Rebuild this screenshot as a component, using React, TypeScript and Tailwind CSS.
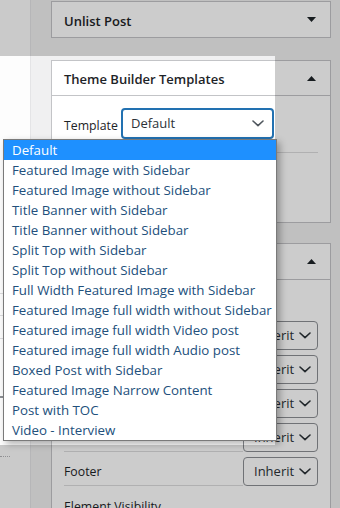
import React from "react";

const Chevron = ({ className = "" }: { className?: string }) => (
  <svg width="12" height="7" viewBox="0 0 12 7" className={className} fill="none">
    <path d="M1 1l5 4.6L11 1" stroke="currentColor" strokeWidth="1.6" strokeLinecap="round" strokeLinejoin="round" />
  </svg>
);

const TriDown = () => (
  <svg width="9" height="5" viewBox="0 0 9 5"><path d="M0 0h9L4.5 5z" fill="#1d2327" /></svg>
);
const TriUp = () => (
  <svg width="9" height="5" viewBox="0 0 9 5"><path d="M0 5h9L4.5 0z" fill="#1d2327" /></svg>
);

const items = [
  "Default",
  "Featured Image with Sidebar",
  "Featured Image without Sidebar",
  "Title Banner with Sidebar",
  "Title Banner without Sidebar",
  "Split Top with Sidebar",
  "Split Top without Sidebar",
  "Full Width Featured Image with Sidebar",
  "Featured Image full width without Sidebar",
  "Featured image full width Video post",
  "Featured image full width Audio post",
  "Boxed Post with Sidebar",
  "Featured Image Narrow Content",
  "Post with TOC",
  "Video - Interview",
];

const rows = ["", "", "", "", "Footer"];

export default function App() {
  return (
    <div
      className="relative w-[340px] h-[508px] overflow-hidden bg-[#f0f0f1] flex text-[#1d2327]"
      style={{ fontFamily: '"Open Sans", "Noto Sans", sans-serif' }}
    >
      {/* left editor strip */}
      <div className="w-[31px] shrink-0 bg-[#fdfdfd] border-r border-[#e4e4e6] flex flex-col">
        <div className="h-[293px] shrink-0" />
        <div className="h-px shrink-0 bg-[#dcdcde]" />
        <div className="h-[21px] shrink-0" />
        <div className="h-px shrink-0 bg-[#dcdcde]" />
        <div className="h-[22px] shrink-0" />
        <div className="h-px shrink-0 bg-[#dcdcde]" />
        <div className="h-[57px] shrink-0" />
        <div className="h-[2px] w-[4px] shrink-0 bg-[#8c8f94]" />
        <div className="h-[58px] shrink-0" />
        <div className="w-[10px] shrink-0 border-t border-dotted border-[#b5b5b8]" />
      </div>
      <div className="w-[20px] shrink-0" />

      {/* sidebar */}
      <div className="w-[280px] shrink-0 flex flex-col">
        {/* Unlist Post */}
        <div className="shrink-0 mt-[1px] h-[37px] bg-white border border-[#c3c4c7] flex items-center pl-[12px] pr-[14px]">
          <span className="flex-1 text-[13px] font-semibold leading-none pt-[3px]">Unlist Post</span>
          <TriDown />
        </div>

        {/* Theme Builder Templates */}
        <div className="shrink-0 mt-[22px] h-[163px] bg-white border border-[#c3c4c7] flex flex-col">
          <div className="shrink-0 h-[35px] border-b border-[#c3c4c7] flex items-center pl-[12px] pr-[14px]">
            <span className="flex-1 text-[13px] font-semibold leading-none pt-[3px]">Theme Builder Templates</span>
            <TriUp />
          </div>
          <div className="px-[12px] pt-[12px]">
            <div className="flex items-center">
              <span className="w-[57px] text-[12.3px] leading-none pt-[6px]">Template</span>
              <div className="w-[153px] h-[31px] border-2 border-[#2271b1] rounded-[4px] flex items-center pl-[8px] pr-[8px] text-[#2c3338]">
                <span className="flex-1 text-[13px]">Default</span>
                <Chevron className="text-[#50575e]" />
              </div>
            </div>
            <div className="mt-[13px] h-px bg-[#dcdcde]" />
          </div>
        </div>

        {/* Layout panel */}
        <div className="shrink-0 mt-[20px] h-[300px] bg-white border border-[#c3c4c7] flex flex-col">
          <div className="shrink-0 h-[36px] border-b border-[#c3c4c7] flex items-center pl-[12px] pr-[14px]">
            <span className="flex-1" />
            <TriUp />
          </div>
          <div className="pl-[12px] pr-[12px] pt-[41px] flex flex-col gap-[5px]">
            {rows.map((r, i) => (
              <div key={i} className="shrink-0 flex items-stretch h-[29px]">
                <div className="flex-1 border-b border-[#dcdcde] flex items-center text-[12.3px] pt-[2px]">{r}</div>
                <div className="w-[75px] h-[29px] border border-[#8c8f94] rounded-[4px] flex items-center pl-[10px] pr-[6px] text-[#2c3338]">
                  <span className="flex-1 text-[13px]">Inherit</span>
                  <Chevron className="text-[#2c3338]" />
                </div>
              </div>
            ))}
            <div className="mt-[7px] text-[12.3px]">Element Visibility</div>
          </div>
        </div>
      </div>
      <div className="flex-1" />

      {/* spotlight dim overlay */}
      <div className="pointer-events-none absolute left-0 top-[56px] w-[275px] h-[389px] shadow-[0_0_0_700px_rgba(0,0,0,0.2)]" />

      {/* open dropdown list */}
      <div className="absolute left-[3px] top-[139px] w-[274px] bg-white border border-[#7a7a7a] shadow-[3px_3px_7px_rgba(0,0,0,0.3)]">
        {items.map((it, i) => (
          <div
            key={it}
            className={
              i === 0
                ? "h-[20px] leading-[20px] pl-[8px] text-[13.3px] bg-[#1e90ff] text-white whitespace-nowrap"
                : "h-[20px] leading-[20px] pl-[8px] text-[13.3px] text-[#22507c] whitespace-nowrap"
            }
          >
            {it}
          </div>
        ))}
      </div>
    </div>
  );
}
